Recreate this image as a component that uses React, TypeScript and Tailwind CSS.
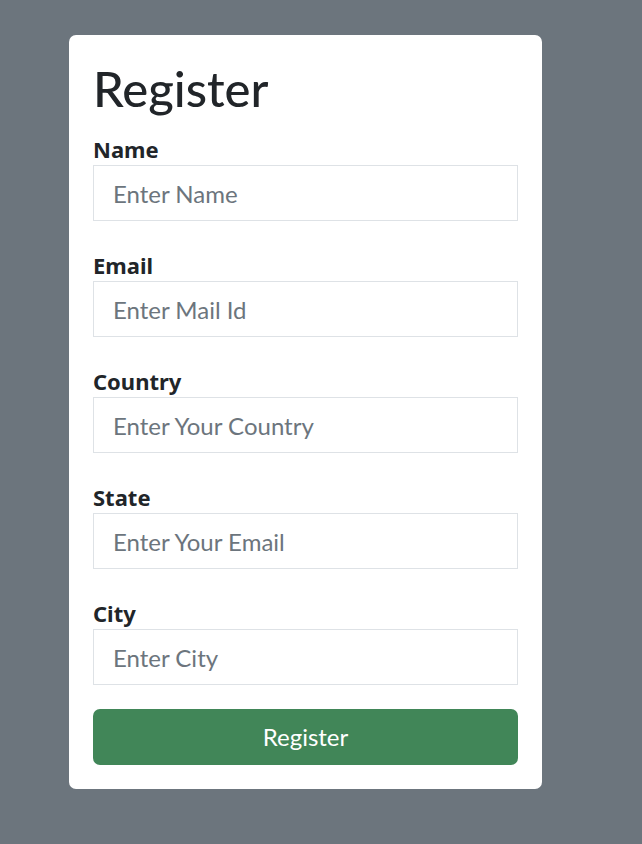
import { useState } from "react";

interface Field {
    name: string;
    label: string;
    placeholder: string;
}

const fields: Field[] = [
    { name: "name", label: "Name", placeholder: "Enter Name" },
    { name: "email", label: "Email", placeholder: "Enter Mail Id" },
    { name: "country", label: "Country", placeholder: "Enter Your Country" },
    { name: "state", label: "State", placeholder: "Enter Your Email" },
    { name: "city", label: "City", placeholder: "Enter City" },
];

const App = () => {
    const [form, setForm] = useState<Record<string, string>>({});
    const handleChange = (e: React.ChangeEvent<HTMLInputElement>) => {
        const { name, value } = e.target;
        setForm({ ...form, [name]: value });
    };
    return (
        <div className="min-h-screen bg-[#6c757d] pt-[35px] pl-[69px] font-['Lato',sans-serif] text-[#212529]">
            <form
                onSubmit={(e) => e.preventDefault()}
                className="w-[473px] rounded-[7px] bg-white p-6"
            >
                <h1 className="mb-[18px] text-[49px] leading-[58px] font-medium">
                    Register
                </h1>
                {fields.map((f, i) => (
                    <div
                        key={f.name}
                        className={i === fields.length - 1 ? "mb-6" : "mb-[30px]"}
                    >
                        <label className="mb-[2px] block font-['Noto_Sans',sans-serif] text-[22px] leading-[28px] font-bold">
                            {f.label}
                        </label>
                        <input
                            type="text"
                            name={f.name}
                            value={form[f.name] ?? ""}
                            onChange={handleChange}
                            placeholder={f.placeholder}
                            className="block h-14 w-full border border-[#dee2e6] px-[19px] text-[24px] outline-none placeholder:text-[#6c757d]"
                        />
                    </div>
                ))}
                <button
                    type="submit"
                    className="h-14 w-full rounded-[7px] bg-[#418658] text-[24px] text-white"
                >
                    Register
                </button>
            </form>
        </div>
    );
};

export default App;
